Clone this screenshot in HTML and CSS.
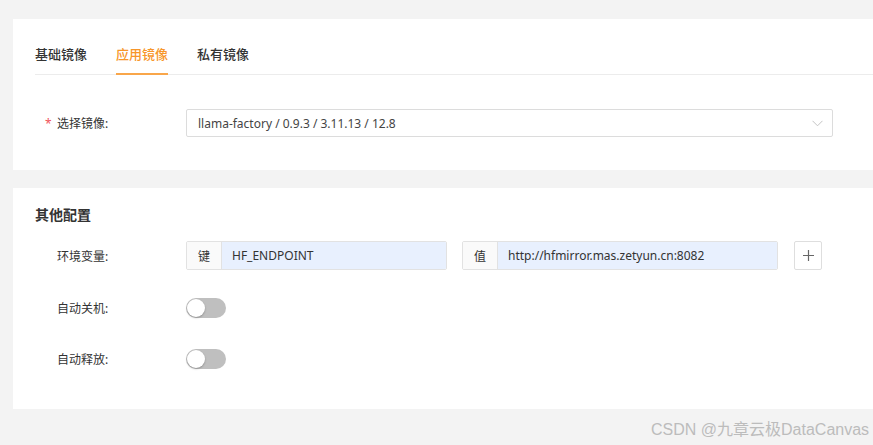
FILE: index.html
```html
<!DOCTYPE html>
<html lang="zh-CN">
<head>
<meta charset="utf-8">
<title>镜像配置</title>
<link rel="stylesheet" href="styles.css">
</head>
<body>
<div class="page">
  <section class="card card-image">
    <div class="tabs">
      <div class="tab">基础镜像</div>
      <div class="tab active">应用镜像</div>
      <div class="tab">私有镜像</div>
    </div>
    <div class="form-row row-select">
      <div class="label"><span class="req">*</span>选择镜像:</div>
      <div class="select">
        <span class="select-text">llama-factory / 0.9.3 / 3.11.13 / 12.8</span>
        <svg class="chevron" width="11" height="7" viewBox="0 0 11 7"><path d="M0.5 0.8 L5.5 5.8 L10.5 0.8" fill="none" stroke="#c4c4c4" stroke-width="1"/></svg>
      </div>
    </div>
  </section>

  <section class="card card-other">
    <h3 class="section-title">其他配置</h3>
    <div class="form-row row-env">
      <div class="label">环境变量:</div>
      <div class="input-group group-key">
        <span class="addon">键</span>
        <span class="input">HF_ENDPOINT</span>
      </div>
      <div class="input-group group-val">
        <span class="addon">值</span>
        <span class="input">http://hfmirror.mas.zetyun.cn:8082</span>
      </div>
      <button class="plus-btn">
        <svg width="11" height="11" viewBox="0 0 11 11"><path d="M5.5 0 V11 M0 5.5 H11" stroke="#666" stroke-width="1.2"/></svg>
      </button>
    </div>
    <div class="form-row row-toggle">
      <div class="label">自动关机:</div>
      <div class="switch"><span class="knob"></span></div>
    </div>
    <div class="form-row row-toggle last">
      <div class="label">自动释放:</div>
      <div class="switch"><span class="knob"></span></div>
    </div>
  </section>
</div>
<div class="watermark">CSDN @九章云极DataCanvas</div>
</body>
</html>
```

FILE: styles.css
```css
html, body {
  margin: 0;
  padding: 0;
}
body {
  width: 873px;
  height: 445px;
  overflow: hidden;
  background: #f3f3f3;
  font-family: "Noto Sans", "Noto Sans CJK SC", sans-serif;
  color: #333;
  position: relative;
}
.page {
  padding: 19px 0 0 13px;
}
.card {
  background: #fff;
  padding: 0 0 0 22px;
  box-sizing: border-box;
}
.card-image {
  height: 151px;
  padding-top: 25px;
}
.card-other {
  margin-top: 18px;
  height: 221px;
  padding-top: 17px;
}
.tabs {
  display: flex;
  border-bottom: 1px solid #ececec;
  height: 31px;
  box-sizing: border-box;
}
.tab {
  font-size: 13px;
  line-height: 20px;
  font-weight: 500;
  color: #333;
  margin-right: 29px;
  height: 30px;
  box-sizing: border-box;
}
.tab.active {
  color: #f7962a;
  border-bottom: 2px solid #f9a64a;
  height: 31px;
}
.form-row {
  display: flex;
  align-items: center;
}
.row-select {
  margin-top: 34px;
}
.label {
  width: 151px;
  box-sizing: border-box;
  padding-left: 22px;
  font-size: 12px;
  color: #333;
  position: relative;
  flex: none;
}
.req {
  position: absolute;
  left: 10px;
  top: 1px;
  color: #f0525a;
  font-size: 12px;
}
.select {
  width: 647px;
  height: 28px;
  border: 1px solid #dcdcdc;
  border-radius: 2px;
  box-sizing: border-box;
  display: flex;
  align-items: center;
  justify-content: space-between;
  padding: 0 9px 0 11px;
}
.select-text {
  font-size: 12px;
  line-height: 16px;
  padding-top: 1px;
  color: #444;
  white-space: nowrap;
}
.section-title {
  margin: 0;
  font-size: 14px;
  line-height: 20px;
  font-weight: 700;
  color: #333;
}
.row-env {
  margin-top: 16px;
}
.input-group {
  display: flex;
  height: 29px;
  border: 1px solid #e2e2e2;
  border-radius: 2px;
  box-sizing: border-box;
  overflow: hidden;
  flex: none;
}
.group-key {
  width: 261px;
  margin-right: 15px;
}
.group-val {
  width: 316px;
  margin-right: 16px;
}
.addon {
  width: 34px;
  flex: none;
  background: #fafafa;
  border-right: 1px solid #e2e2e2;
  display: flex;
  align-items: center;
  justify-content: center;
  font-size: 12px;
  color: #333;
}
.input {
  flex: 1;
  background: #e8f0fe;
  display: flex;
  align-items: center;
  padding-left: 10px;
  font-size: 12px;
  color: #333;
}
.plus-btn {
  width: 28px;
  height: 29px;
  border: 1px solid #dedede;
  border-radius: 2px;
  background: #fff;
  padding: 0;
  display: flex;
  align-items: center;
  justify-content: center;
}
.row-toggle {
  margin-top: 23px;
  height: 29px;
}
.row-toggle.last {
  margin-top: 22px;
}
.switch {
  width: 40px;
  height: 20px;
  border-radius: 10px;
  background: #bfbfbf;
  position: relative;
}
.knob {
  position: absolute;
  left: 1px;
  top: 1px;
  width: 18px;
  height: 18px;
  border-radius: 50%;
  background: #fff;
  box-shadow: 0 1px 2px rgba(0,0,0,0.25);
}
.watermark {
  position: absolute;
  left: 651px;
  top: 420px;
  font-family: "Liberation Sans", "Noto Sans CJK SC", sans-serif;
  font-size: 16px;
  line-height: 20px;
  color: #bcbcbc;
  white-space: nowrap;
}
```
